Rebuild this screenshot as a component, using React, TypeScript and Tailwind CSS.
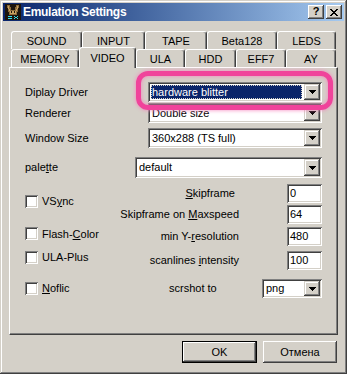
import React from "react";

const raised =
  "bg-[#d4d0c8] shadow-[inset_-1px_-1px_#404040,inset_1px_1px_#ffffff,inset_-2px_-2px_#808080]";
const sunken =
  "bg-white shadow-[inset_1px_1px_#808080,inset_-1px_-1px_#ffffff,inset_2px_2px_#404040,inset_-2px_-2px_#d4d0c8]";

function Arrow() {
  return (
    <svg width="7" height="4" viewBox="0 0 7 4" shapeRendering="crispEdges">
      <rect x="0" y="0" width="7" height="1" fill="#000" />
      <rect x="1" y="1" width="5" height="1" fill="#000" />
      <rect x="2" y="2" width="3" height="1" fill="#000" />
      <rect x="3" y="3" width="1" height="1" fill="#000" />
    </svg>
  );
}

function Combo({ value, className, selected }: { value: string; className: string; selected?: boolean }) {
  return (
    <div className={`flex p-[2px] ${sunken} ${className}`}>
      <div className="flex min-w-0 flex-1 items-center py-[1px] pl-[1px] pr-[2px]">
        {selected ? (
          <div className="flex h-full w-full items-center bg-[#0a246a] pl-[1px] text-white outline-1 -outline-offset-1 outline-dotted outline-[#d4d0c8]">
            {value}
          </div>
        ) : (
          <span className="whitespace-nowrap pl-[1px]">{value}</span>
        )}
      </div>
      <div className="flex w-[16px] items-center justify-center bg-[#d4d0c8] shadow-[inset_-1px_-1px_#404040,inset_1px_1px_#d4d0c8,inset_-2px_-2px_#808080,inset_2px_2px_#ffffff]">
        <Arrow />
      </div>
    </div>
  );
}

function Edit({ value, className }: { value: string; className: string }) {
  return (
    <div className={`flex w-[35px] items-center pl-[3px] ${sunken} ${className}`}>{value}</div>
  );
}

function Check({ children, className }: { children: React.ReactNode; className?: string }) {
  return (
    <div className={`flex items-center ${className ?? ""}`}>
      <div className={`h-[13px] w-[13px] ${sunken}`} />
      <span className="ml-[4px]">{children}</span>
    </div>
  );
}

function Tab({ label, className, active }: { label: string; className: string; active?: boolean }) {
  return (
    <div
      className={`flex justify-center rounded-t-[3px] border-l border-r border-t border-l-white border-r-[#404040] border-t-white bg-[#d4d0c8] shadow-[inset_-1px_0_#808080] ${
        active ? "relative z-10 -mt-[2px] h-[21px] items-start pt-[2px]" : "h-full items-center pt-[1px]"
      } ${className}`}
    >
      {label}
    </div>
  );
}

function AppIcon() {
  return (
    <svg width="16" height="16" viewBox="0 0 16 16" shapeRendering="crispEdges">
      <rect x="0" y="0" width="16" height="16" fill="#1c140c" />
      <path d="M2 1h3v2h1v3h4V3h1V1h3v3h-1v4h-1v3H4V8H3V4H2z" fill="#8a6a3a" />
      <path d="M3 2h1v3h1v2h6V5h1V2h1v3h-1v2h-1v3H5V7H4V5H3z" fill="#c8a060" />
      <rect x="6" y="7" width="1" height="2" fill="#1c140c" />
      <rect x="9" y="7" width="1" height="2" fill="#1c140c" />
      <path d="M3 12h4v1H5v1h2v1H3v-1h2v-1H3zM9 12h1v1h2v-1h1v1h-1v1h1v1h-1v-1h-2v1H9v-1h1v-1H9z" fill="#30e0f0" />
    </svg>
  );
}

export default function App() {
  return (
    <div className="relative flex h-[374px] w-[347px] flex-col overflow-hidden bg-[#d4d0c8] p-[3px] font-['Liberation_Sans',Arial,sans-serif] text-[11px] text-black shadow-[inset_-1px_-1px_#404040,inset_1px_1px_#d4d0c8,inset_-2px_-2px_#808080,inset_2px_2px_#ffffff]">
      {/* title bar */}
      <div className="flex h-[18px] items-center bg-gradient-to-r from-[#0a246a] to-[#a6caf0] pl-[2px] pr-[2px]">
        <AppIcon />
        <span className="ml-[2px] text-[12px] font-bold tracking-[-0.3px] text-white">Emulation Settings</span>
        <div className={`ml-auto flex h-[14px] w-[16px] items-center justify-center pb-[1px] text-[11px] font-bold leading-none ${raised}`}>
          ?
        </div>
        <div className={`ml-[2px] flex h-[14px] w-[16px] items-center justify-center ${raised}`}>
          <svg width="8" height="7" viewBox="0 0 8 7" shapeRendering="crispEdges">
            <path
              d="M0 0h2v1h1v1h2V1h1V0h2v1H7v1H6v1H5v1h1v1h1v1h1v1H6V6H5V5H3v1H2v1H0V6h1V5h1V4h1V3H2V2H1V1H0z"
              fill="#000"
            />
          </svg>
        </div>
      </div>

      <div className="flex flex-1 flex-col px-[6px]">
        {/* tabs */}
        <div className="ml-[2px] mt-[10px] flex h-[18px]">
          <Tab label="SOUND" className="w-[71px]" />
          <Tab label="INPUT" className="w-[63px]" />
          <Tab label="TAPE" className="w-[62px]" />
          <Tab label="Beta128" className="w-[70px]" />
          <Tab label="LEDS" className="w-[59px]" />
        </div>
        <div className="ml-[2px] flex h-[18px] items-start">
          <Tab label="MEMORY" className="w-[68px]" />
          <Tab label="VIDEO" className="w-[57px]" active />
          <Tab label="ULA" className="w-[49px]" />
          <Tab label="HDD" className="w-[51px]" />
          <Tab label="EFF7" className="w-[50px]" />
          <Tab label="AY" className="w-[50px]" />
        </div>

        {/* panel */}
        <div className="flex h-[268px] flex-col border-b border-l border-r border-t border-b-[#404040] border-l-white border-r-[#404040] border-t-white pl-[15px] pr-[15px] pt-[14px] shadow-[inset_-1px_-1px_#808080]">
          <div className="flex items-center">
            <span>Diplay Driver</span>
            <Combo value="hardware blitter" className="ml-auto h-[20px] w-[174px]" selected />
          </div>
          <div className="mt-[1px] flex items-center">
            <span>Renderer</span>
            <Combo value="Double size" className="ml-auto h-[20px] w-[174px]" />
          </div>
          <div className="mt-[5px] flex items-center">
            <span>Window Size</span>
            <Combo value="360x288 (TS full)" className="ml-auto h-[20px] w-[174px]" />
          </div>
          <div className="mt-[9px] flex items-center">
            <span>
              pale<u>t</u>te
            </span>
            <Combo value="default" className="ml-auto h-[21px] w-[187px]" />
          </div>

          <div className="mt-[6px] flex">
            <div className="flex flex-col pt-[9px]">
              <Check>
                VS<u>y</u>nc
              </Check>
              <Check className="mt-[16px]">
                Flash-<u>C</u>olor
              </Check>
              <Check className="mt-[7px]">ULA-Plus</Check>
            </div>
            <div className="ml-auto flex flex-col items-end">
              <div className="flex items-center">
                <span className="pr-[4px]">
                  <u>S</u>kipframe
                </span>
                <Edit value="0" className="ml-[48px] h-[19px]" />
              </div>
              <div className="mt-[2px] flex items-center">
                <span>
                  Skipframe on <u>M</u>axspeed
                </span>
                <Edit value="64" className="ml-[48px] h-[19px]" />
              </div>
              <div className="mt-[3px] flex items-center">
                <span>
                  min Y-<u>r</u>esolution
                </span>
                <Edit value="480" className="ml-[48px] h-[19px]" />
              </div>
              <div className="mt-[5px] flex items-center">
                <span>
                  scanlines <u>i</u>ntensity
                </span>
                <Edit value="100" className="ml-[48px] h-[19px]" />
              </div>
            </div>
          </div>

          <div className="mt-[9px] flex items-center">
            <Check className="w-[144px]">
              <u>N</u>oflic
            </Check>
            <span>scrshot to</span>
            <Combo value="png" className="ml-auto h-[19px] w-[60px]" />
          </div>
        </div>

        {/* buttons */}
        <div className="mt-[6px] flex justify-end gap-[6px] pr-[1px]">
          <div className="flex h-[22px] w-[75px] border border-black">
            <div className={`flex flex-1 items-center justify-center ${raised}`}>OK</div>
          </div>
          <div className={`flex h-[22px] w-[74px] items-center justify-center ${raised}`}>Отмена</div>
        </div>
      </div>

      {/* highlight annotation */}
      <div className="pointer-events-none absolute left-[136px] top-[71px] h-[39px] w-[197px] rounded-[12px] border-[5px] border-[#f0439b] shadow-[0_0_4px_#f583bd,inset_0_0_4px_#f583bd]" />
    </div>
  );
}
